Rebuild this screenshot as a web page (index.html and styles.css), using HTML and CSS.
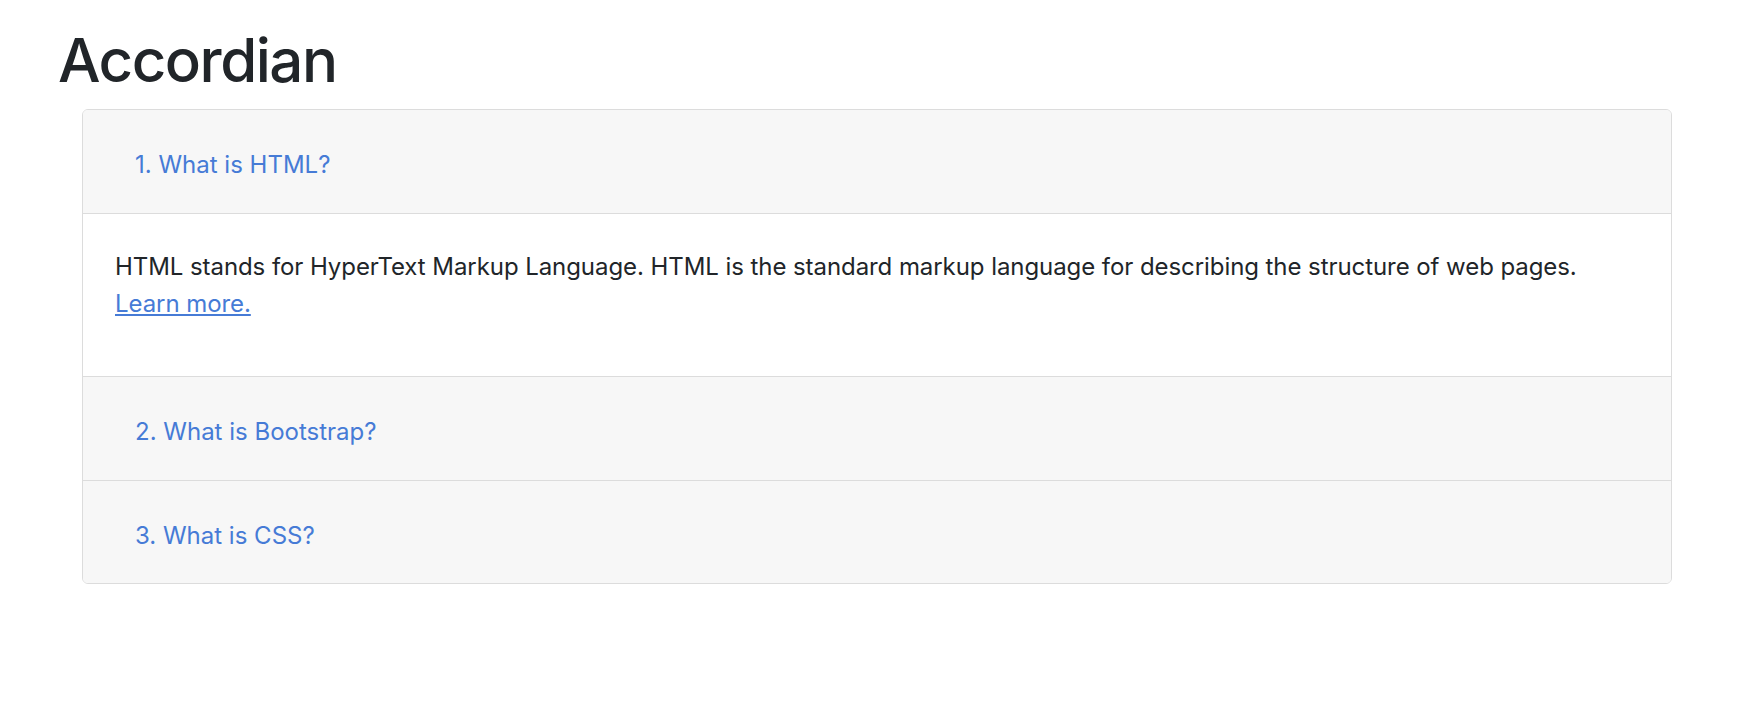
FILE: index.html
```html
<!DOCTYPE html>
<html lang="en">
<head>
<meta charset="utf-8">
<title>Accordian</title>
<link rel="stylesheet" href="styles.css">
</head>
<body>
<div class="page">
  <h1 class="title">Accordian</h1>
  <div class="accordion">
    <div class="item">
      <div class="item-header"><a class="item-toggle" href="#">1. What is HTML?</a></div>
      <div class="item-body">
        <p>HTML stands for HyperText Markup Language. HTML is the standard markup language for describing the structure of web pages. <a class="more" href="#">Learn more.</a></p>
      </div>
    </div>
    <div class="item">
      <div class="item-header"><a class="item-toggle" href="#">2. What is Bootstrap?</a></div>
    </div>
    <div class="item">
      <div class="item-header last"><a class="item-toggle" href="#">3. What is CSS?</a></div>
    </div>
  </div>
</div>
</body>
</html>
```
FILE: styles.css
```css
* { box-sizing: border-box; }
html, body { margin: 0; padding: 0; background: #fff; }
body {
  font-family: Inter, "Noto Sans", "Liberation Sans", sans-serif;
  color: #212529;
}
.page {
  padding: 24px 81px 0 60px;
}
.title {
  margin: 0 0 13px -2px;
  font-size: 60px;
  line-height: 72px;
  font-weight: 500;
  letter-spacing: -1.5px;
}
.accordion {
  margin-left: 22px;
  border: 1px solid #dcdcdc;
  border-radius: 6px;
  overflow: hidden;
}
.item-header {
  background: #f7f7f7;
  border-bottom: 1px solid #dcdcdc;
  height: 104px;
  padding: 37px 0 0 52px;
}
.item-header.last { border-bottom: 0; height: 102px; }
.item-toggle {
  font-size: 24px;
  line-height: 36px;
  color: #467bd6;
  text-decoration: none;
}
.item-body {
  border-bottom: 1px solid #dcdcdc;
  height: 163px;
  padding: 34px 32px 0;
}
.item-body p {
  margin: 0;
  font-size: 24px;
  line-height: 37px;
  letter-spacing: -0.07px;
}
.more {
  color: #467bd6;
  text-decoration: underline;
}
```
